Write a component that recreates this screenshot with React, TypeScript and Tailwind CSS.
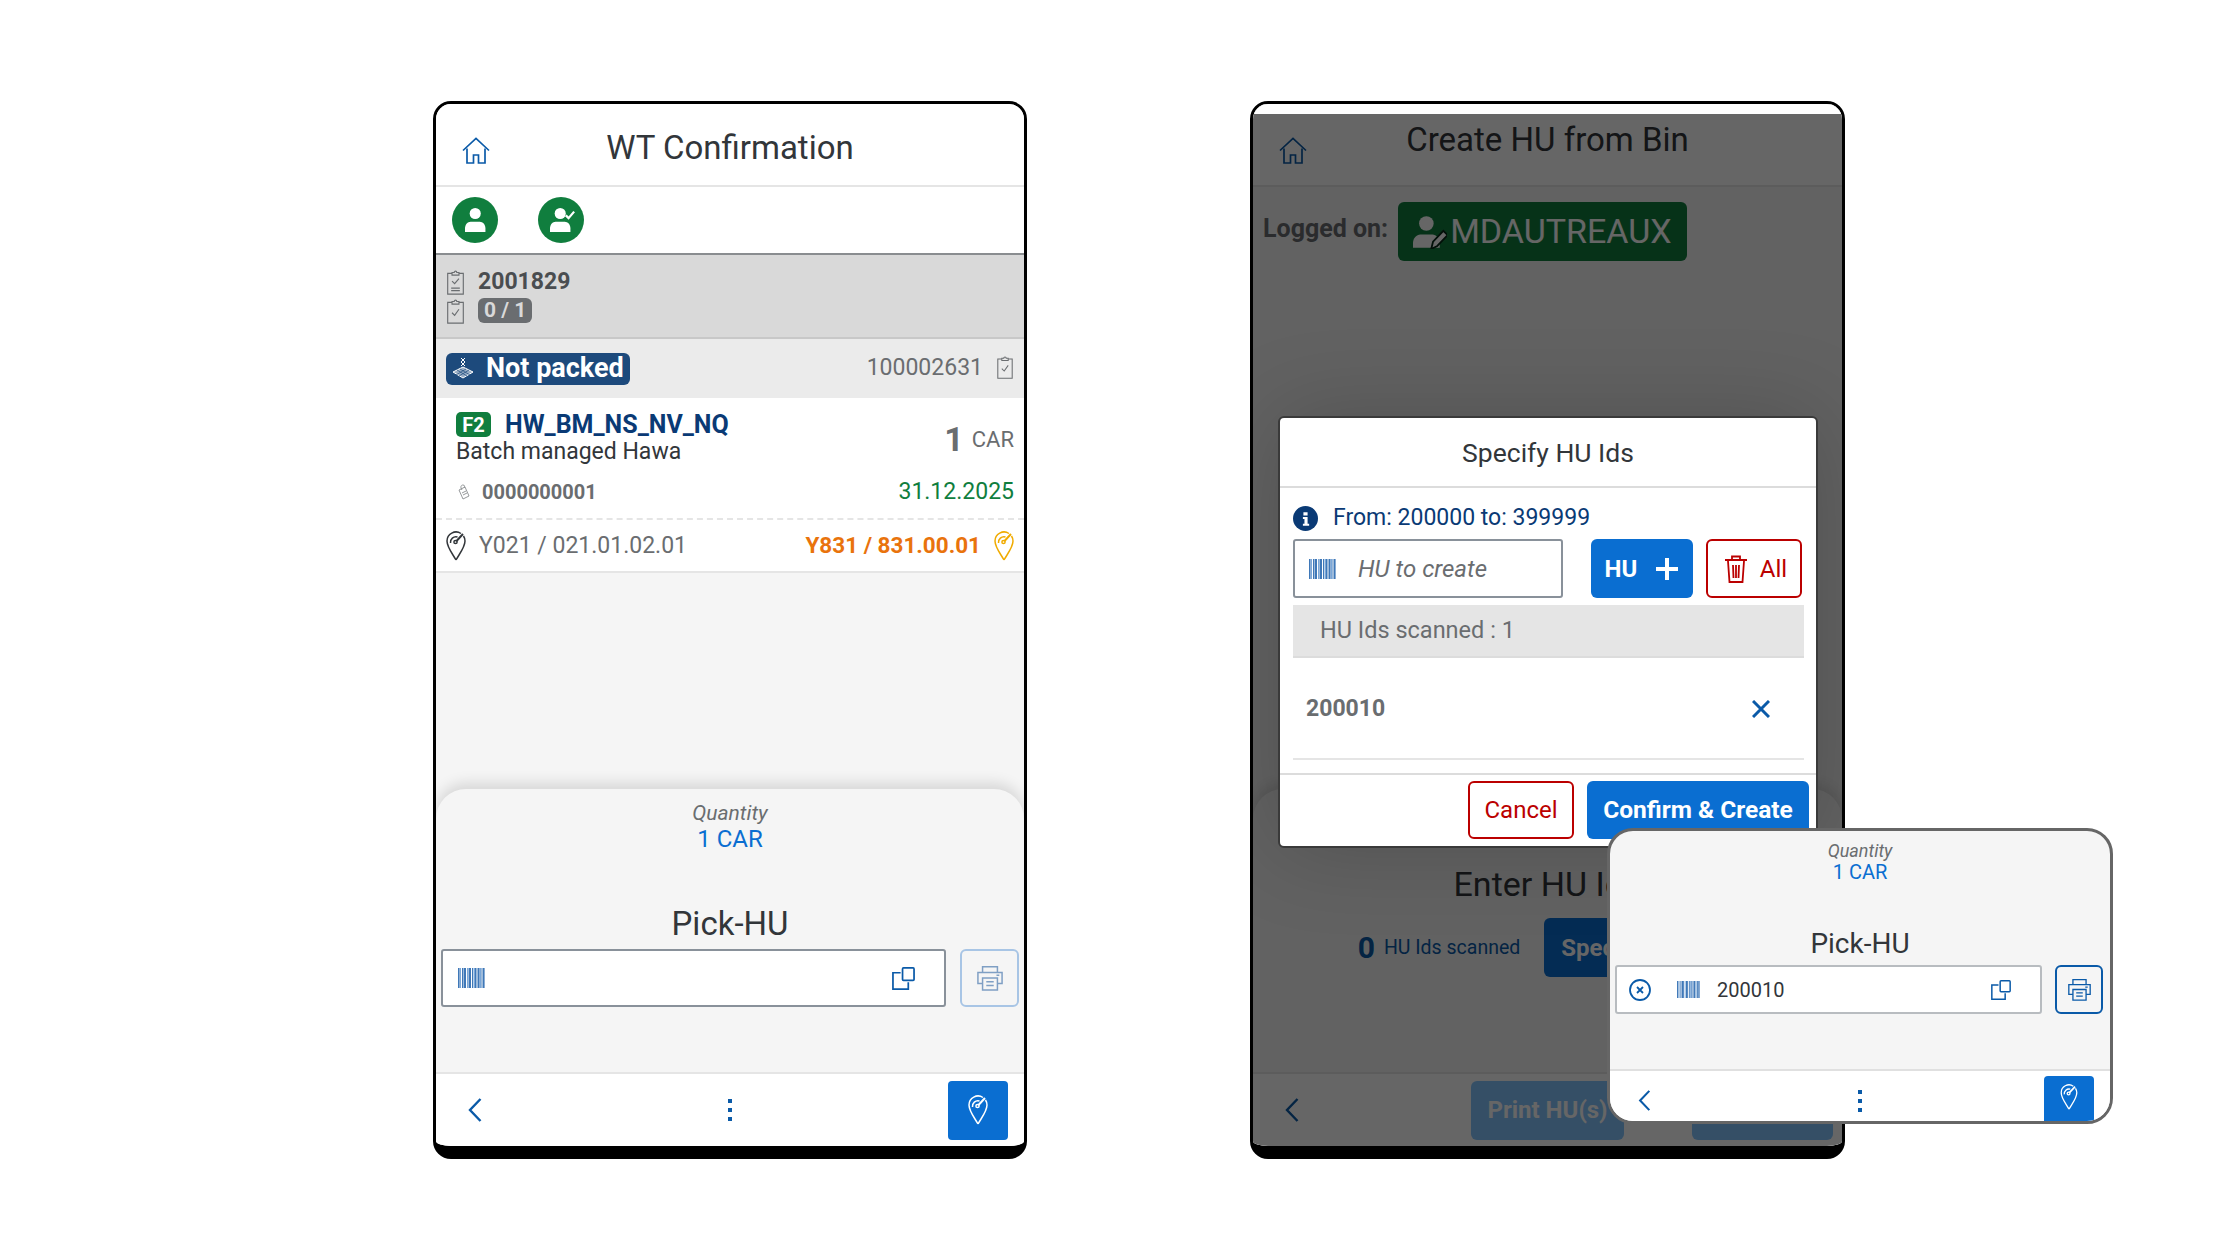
import type { ReactNode } from 'react';

const FONT = "font-['Roboto','Liberation_Sans',sans-serif]";

function IconHome({ className }: { className: string }) {
    return (
        <svg viewBox="0 0 28 28" fill="none" stroke="currentColor" strokeWidth="1.7" className={className}>
            <path d="M1 13.500 14 1.500l13 12" />
            <path d="M5 11.500V26h6.500v-8h5v8H23V11.500" />
        </svg>
    );
}

function IconPin({ className }: { className: string }) {
    return (
        <svg viewBox="0 0 20 30" fill="none" stroke="currentColor" strokeWidth="1.5" className={className}>
            <path d="M10 29C6 22 1 16 1 10a9 9 0 0 1 14-7.500" />
            <path d="M10 29c4-7 9-13 9-19 0-2-.6-3.600-1.500-5" />
            <path d="M4.500 12a5.500 5.500 0 0 1 7-6" />
            <circle cx="9.500" cy="11" r="1.600" />
            <path d="m10.500 10 6.500-7" strokeWidth="2" />
        </svg>
    );
}

function IconClipboard({ lines, className }: { lines?: boolean; className: string }) {
    return (
        <svg viewBox="0 0 20 30" fill="none" stroke="currentColor" strokeWidth="1.3" className={className}>
            <path d="M6 5H1v24h18V5h-5" />
            <path d="M6 7V4h2.500a1.500 1.500 0 0 1 3 0H14v3Z" />
            <path d={lines ? 'm6 14 3 3 5-6' : 'm6 17 3 3 5-7'} />
            {lines && <path d="M5 22h10M5 25h10" />}
        </svg>
    );
}

function IconBarcode({ className }: { className: string }) {
    const bars = [0, 2, 4, 5.5, 7, 9, 10.5, 12, 14, 15.5, 17, 18.5, 20, 22, 23.5, 25];
    return (
        <svg viewBox="0 0 27 20" className={className}>
            {bars.map((x, i) => (
                <rect key={x} x={x} y="0" width={i % 3 === 0 ? 1.6 : 1} height="20" fill={i % 4 === 1 ? '#7aa7d8' : '#3f78b8'} />
            ))}
        </svg>
    );
}

function IconCopy({ className }: { className: string }) {
    return (
        <svg viewBox="0 0 24 24" fill="none" stroke="currentColor" strokeWidth="1.8" className={className}>
            <rect x="11" y="1" width="12" height="13" rx="1" />
            <path d="M9 6H1v17h16v-7" />
        </svg>
    );
}

function IconPrinter({ className }: { className: string }) {
    return (
        <svg viewBox="0 0 28 28" fill="none" stroke="currentColor" strokeWidth="1.6" className={className}>
            <path d="M6 8V2h16v6" />
            <path d="M6 20H1V8h26v12h-5" />
            <path d="M6 14h16v13H6z" />
            <path d="M10 18h8M10 22h8M21 11h3" />
        </svg>
    );
}

function IconChevron({ className }: { className: string }) {
    return (
        <svg viewBox="0 0 14 24" fill="none" stroke="currentColor" strokeWidth="2.400" className={className}>
            <path d="M12.500 1 2 12l10.500 11" />
        </svg>
    );
}

function IconDots() {
    return (
        <div className="flex flex-col gap-[5px]">
            <span className="size-[4px] bg-[#0a5aa8]" />
            <span className="size-[4px] bg-[#0a5aa8]" />
            <span className="size-[4px] bg-[#0a5aa8]" />
        </div>
    );
}

function IconPerson({ className, check, edit }: { className: string; check?: boolean; edit?: boolean }) {
    return (
        <svg viewBox="0 0 28 28" className={className} fill="currentColor">
            <circle cx="11" cy="7" r="6" />
            <path d="M0 27v-4c0-4 3-7 6-7h10c3 0 6 3 6 7v4Z" />
            {check && <path d="m17 9 3 3 6-7" fill="none" stroke="currentColor" strokeWidth="2.400" />}
            {edit && <path d="M15 28l1.500-6L25 13l3.500 3.500-8.500 9Z" stroke="#072a17" strokeWidth="1.500" />}
        </svg>
    );
}

function IconTag({ className }: { className: string }) {
    return (
        <svg viewBox="0 0 14 16" fill="none" stroke="currentColor" strokeWidth="0.9" className={className}>
            <path d="m2 6 6-3 4 9-6 3Z" />
            <path d="M5 6c-2-3-1-5 1-5s2 2 1 3M5 9l4-2M6 11l4-2" />
        </svg>
    );
}

function IconPallet({ className }: { className: string }) {
    return (
        <svg viewBox="0 0 22 22" fill="none" stroke="currentColor" strokeWidth="1" className={className}>
            <path d="M9 1l4 4M13 1 9 5M9 5l4 4M13 5 9 9" />
            <path d="M11 10 1 15l10 6 10-6Z" fill="currentColor" fillOpacity="0.55" />
            <path d="m5 13 10 6M8 12l10 6M17 13 7 19M14 12 4 18" stroke="#1d4a7c" strokeWidth="0.7" />
        </svg>
    );
}

function QuantityBlock({ small }: { small?: boolean }) {
    return (
        <div className="flex flex-col items-center">
            <span className={`italic text-[#6a6d70] ${small ? 'text-[18px] leading-[20px]' : 'text-[21px] leading-[25px]'}`}>Quantity</span>
            <span className={`text-[#0a6ed1] ${small ? 'text-[20px] leading-[22px]' : 'text-[24px] leading-[26px]'}`}>1 CAR</span>
        </div>
    );
}

function WtConfirmationPhone() {
    return (
        <div className="flex h-[1058px] w-[594px] flex-col overflow-hidden rounded-[18px] border-[3px] border-b-[13px] border-black bg-[#f5f5f5]">
            <header className="relative flex h-[83px] shrink-0 items-center justify-center border-b-2 border-[#e5e5e5] bg-white pt-[7px]">
                <IconHome className="absolute left-[26px] top-[33px] size-[28px] text-[#0a5aa8]" />
                <h1 className="text-[33px] text-[#32363a]">WT Confirmation</h1>
            </header>
            <div className="flex h-[66px] shrink-0 items-center gap-[40px] bg-white pl-[16px]">
                <div className="flex size-[46px] items-center justify-center rounded-full bg-[#107e3e] text-white">
                    <IconPerson className="ml-[6px] size-[26px]" />
                </div>
                <div className="flex size-[46px] items-center justify-center rounded-full bg-[#107e3e] text-white">
                    <IconPerson check className="ml-[3px] size-[26px]" />
                </div>
            </div>
            <div className="flex h-[86px] shrink-0 flex-col justify-center gap-[3px] border-y-2 border-t-[#8a8d90] border-b-[#c8c8c8] bg-[#d9d9d9] pl-[10px]">
                <div className="flex items-center gap-[13px]">
                    <IconClipboard lines className="h-[26px] w-[19px] text-[#6a6d70]" />
                    <span className="text-[23px] font-bold leading-[26px] text-[#4a4d50]">2001829</span>
                </div>
                <div className="flex items-center gap-[13px]">
                    <IconClipboard className="h-[26px] w-[19px] text-[#6a6d70]" />
                    <span className="rounded-[6px] bg-[#6a6d70] px-[6px] text-[21px] font-bold leading-[25px] text-[#d9d9d9]">0 / 1</span>
                </div>
            </div>
            <div className="flex h-[59px] shrink-0 items-center justify-between bg-[#ebebeb] pl-[10px] pr-[10px]">
                <div className="flex h-[32px] w-[184px] items-center gap-[12px] rounded-[6px] bg-[#1d4a7c] pb-[1px] pl-[6px] text-white">
                    <IconPallet className="size-[22px]" />
                    <span className="text-[27px] font-bold leading-none">Not packed</span>
                </div>
                <div className="flex items-center gap-[13px]">
                    <span className="text-[23px] text-[#6a6d70]">100002631</span>
                    <IconClipboard className="mb-[4px] h-[24px] w-[18px] text-[#6a6d70]" />
                </div>
            </div>
            <div className="flex h-[120px] shrink-0 flex-col bg-white pl-[20px] pr-[10px]">
                <div className="flex items-center justify-between pt-[14px]">
                    <div className="flex flex-col">
                        <div className="flex items-center gap-[14px]">
                            <span className="flex h-[25px] w-[35px] items-center justify-center rounded-[5px] bg-[#107e3e] text-[20px] font-bold text-white">F2</span>
                            <span className="text-[25px] font-bold leading-[25px] text-[#0a3a75]">HW_BM_NS_NV_NQ</span>
                        </div>
                        <span className="pt-[1px] text-[23px] leading-[28px] text-[#32363a]">Batch managed Hawa</span>
                    </div>
                    <div className="flex items-center gap-[8px]">
                        <span className="text-[34px] font-bold leading-none text-[#6a6d70]">1</span>
                        <span className="text-[22px] text-[#6a6d70]">CAR</span>
                    </div>
                </div>
                <div className="mt-[9px] flex items-center justify-between">
                    <div className="flex items-center gap-[10px]">
                        <IconTag className="size-[16px] text-[#8a8d90]" />
                        <span className="text-[20px] font-bold text-[#6a6d70]">0000000001</span>
                    </div>
                    <span className="text-[23px] text-[#107e3e]">31.12.2025</span>
                </div>
            </div>
            <div className="flex h-[55px] shrink-0 items-center justify-between border-y-2 border-t-[#e5e5e5] border-b-[#e5e5e5] bg-white px-[10px] pt-[1px] [border-top-style:dashed]">
                <div className="flex items-center gap-[13px]">
                    <IconPin className="h-[30px] w-[20px] text-[#32363a]" />
                    <span className="text-[23px] text-[#6a6d70]">Y021 / 021.01.02.01</span>
                </div>
                <div className="flex items-center gap-[13px]">
                    <span className="text-[22.500px] font-bold text-[#e9730c]">Y831 / 831.00.01</span>
                    <IconPin className="h-[30px] w-[20px] text-[#f0ab00]" />
                </div>
            </div>
            <div className="flex-1" />
            <section className="flex h-[283px] shrink-0 flex-col items-center rounded-t-[30px] bg-[#f5f5f5] pt-[12px] shadow-[0_-6px_14px_rgba(0,0,0,0.12)]">
                <QuantityBlock />
                <h2 className="mt-[51px] text-[33px] leading-[42px] text-[#32363a]">Pick-HU</h2>
                <div className="mt-[4px] flex w-full gap-[14px] pl-[5px] pr-[5px]">
                    <div className="flex h-[58px] w-[505px] items-center justify-between rounded-[3px] border-2 border-[#89919a] bg-white px-[15px] pr-[29px]">
                        <IconBarcode className="h-[20px] w-[27px]" />
                        <IconCopy className="size-[23px] text-[#0a5aa8]" />
                    </div>
                    <div className="flex h-[58px] w-[59px] items-center justify-center rounded-[6px] border-2 border-[#a8c5e5]">
                        <IconPrinter className="size-[26px] text-[#7f9fc4]" />
                    </div>
                </div>
            </section>
            <footer className="flex h-[74px] shrink-0 items-center justify-between border-t-2 border-[#e5e5e5] bg-white pl-[32px] pr-[16px]">
                <div className="w-[44px]">
                    <IconChevron className="h-[24px] w-[14px] text-[#0a5aa8]" />
                </div>
                <IconDots />
                <div className="flex h-[59px] w-[60px] items-center justify-center rounded-[4px] bg-[#0a6ed1]">
                    <IconPin className="h-[30px] w-[20px] text-white" />
                </div>
            </footer>
        </div>
    );
}

function DialogButton({ className, children }: { className: string; children: ReactNode }) {
    return <div className={`flex h-[58px] items-center justify-center rounded-[6px] ${className}`}>{children}</div>;
}

function SpecifyDialog() {
    return (
        <div className="absolute left-[25px] top-[312px] flex h-[432px] w-[540px] flex-col rounded-[6px] border-2 border-[#3a3a3a] bg-white shadow-[0_0_90px_rgba(0,0,0,0.18)]">
            <div className="flex h-[70px] shrink-0 items-center justify-center border-b-2 border-[#dcdcdc] pt-[2px]">
                <h3 className="text-[26.500px] text-[#32363a]">Specify HU Ids</h3>
            </div>
            <div className="flex flex-1 flex-col pl-[13px] pr-[12px]">
                <div className="flex h-[51px] items-center gap-[15px] pt-[10px]">
                    <svg viewBox="0 0 24 24" className="size-[25px]">
                        <circle cx="12" cy="12" r="12" fill="#0a3a75" />
                        <path d="M10 6h4v3h-4zM9.500 10.500H14V17h1.500v2h-6v-2H11v-4.500H9.500z" fill="#fff" />
                    </svg>
                    <span className="text-[23px] text-[#0a3a75]">From: 200000 to: 399999</span>
                </div>
                <div className="flex gap-[13px]">
                    <div className="mr-[15px] flex h-[59px] w-[270px] items-center gap-[22px] rounded-[3px] border-2 border-[#89919a] pl-[14px]">
                        <IconBarcode className="h-[20px] w-[27px]" />
                        <span className="text-[24px] italic text-[#6a6d70]">HU to create</span>
                    </div>
                    <DialogButton className="h-[59px] w-[102px] gap-[18px] bg-[#0a6ed1] text-white">
                        <span className="text-[24px] font-bold">HU</span>
                        <svg viewBox="0 0 24 24" className="size-[24px]" fill="none" stroke="currentColor" strokeWidth="4">
                            <path d="M12 1v22M1 12h22" />
                        </svg>
                    </DialogButton>
                    <DialogButton className="h-[59px] w-[96px] gap-[12px] border-2 border-[#bb0000] pl-[3px] text-[#bb0000]">
                        <svg viewBox="0 0 24 28" fill="none" stroke="currentColor" strokeWidth="1.800" className="h-[28px] w-[24px]">
                            <path d="M1 5h22M8 4V1.500h8V4M4 6l1.500 21h13L20 6M9 10l.5 13M12 10v13M15 10l-.5 13" />
                        </svg>
                        <span className="text-[24px]">All</span>
                    </DialogButton>
                </div>
                <div className="mt-[7px] flex h-[53px] shrink-0 items-center border-b-2 border-[#dcdcdc] bg-[#e5e5e5] pl-[27px]">
                    <span className="text-[23.500px] text-[#6a6d70]">HU Ids scanned : 1</span>
                </div>
                <div className="flex h-[102px] shrink-0 items-center justify-between border-b-2 border-[#e5e5e5] pl-[13px] pr-[34px] pt-[2px]">
                    <span className="text-[23px] font-bold text-[#6a6d70]">200010</span>
                    <svg viewBox="0 0 18 18" className="size-[18px] text-[#0a5aa8]" fill="none" stroke="currentColor" strokeWidth="3">
                        <path d="m1 1 16 16M17 1 1 17" />
                    </svg>
                </div>
            </div>
            <div className="flex h-[73px] shrink-0 items-start justify-end gap-[13px] border-t-2 border-[#dcdcdc] pr-[7px] pt-[6px]">
                <DialogButton className="w-[106px] border-2 border-[#bb0000] text-[#bb0000]">
                    <span className="text-[24px]">Cancel</span>
                </DialogButton>
                <DialogButton className="w-[222px] bg-[#0a6ed1] text-white">
                    <span className="text-[24.500px] font-bold">Confirm &amp; Create</span>
                </DialogButton>
            </div>
        </div>
    );
}

function CreateHuPhone() {
    return (
        <div className="relative flex h-[1058px] w-[595px] flex-col overflow-hidden rounded-[18px] border-[3px] border-b-[13px] border-black bg-[#f5f5f5]">
            <header className="relative flex h-[83px] shrink-0 justify-center border-b-2 border-[#e5e5e5] bg-white">
                <IconHome className="absolute left-[26px] top-[33px] size-[28px] text-[#0a5aa8]" />
                <h1 className="pt-[14px] text-[33px] leading-[44px] text-[#32363a]">Create HU from Bin</h1>
            </header>
            <div className="flex shrink-0 items-start gap-[10px] pl-[10px] pt-[15px]">
                <span className="pt-[8px] text-[25px] font-bold text-[#6a6d70]">Logged on:</span>
                <div className="flex h-[59px] w-[289px] items-center gap-[3px] rounded-[6px] bg-[#107e3e] pl-[15px] text-white">
                    <IconPerson edit className="size-[34px]" />
                    <span className="text-[34px]">MDAUTREAUX</span>
                </div>
            </div>
            <div className="flex-1" />
            <section className="flex h-[283px] shrink-0 flex-col items-center rounded-t-[30px] bg-[#f5f5f5] pt-[73px] shadow-[0_-6px_14px_rgba(0,0,0,0.12)]">
                <h2 className="text-[34px] leading-[44px] text-[#32363a]">Enter HU Ids</h2>
                <div className="mt-[12px] flex items-center">
                    <span className="text-[30px] font-bold text-[#0a5aa8]">0</span>
                    <span className="ml-[9px] text-[19.500px] text-[#0a5aa8]">HU Ids scanned</span>
                    <div className="ml-[24px] flex h-[59px] w-[193px] items-center rounded-[6px] bg-[#0a6ed1] pl-[17px] text-[24px] font-bold text-white">Specify</div>
                </div>
            </section>
            <footer className="flex h-[74px] shrink-0 items-center border-t-2 border-[#e5e5e5] bg-white pl-[32px]">
                <IconChevron className="h-[24px] w-[14px] text-[#0a5aa8]" />
                <div className="ml-[172px] flex h-[59px] w-[153px] items-center justify-center rounded-[6px] bg-[#85c5ff] text-[24px] font-bold text-white">Print HU(s)</div>
                <div className="ml-[68px] h-[59px] w-[141px] rounded-[6px] bg-[#85c5ff]" />
            </footer>
            <div className="absolute inset-0 border-t-[10px] border-white bg-black/60" />
            <SpecifyDialog />
        </div>
    );
}

function PickHuCard() {
    return (
        <div className="absolute left-[1607px] top-[828px] flex h-[296px] w-[506px] flex-col overflow-hidden rounded-[26px] border-[3px] border-[#666666] bg-[#f5f5f5]">
            <div className="flex h-[238px] shrink-0 flex-col items-center pt-[10px]">
                <QuantityBlock small />
                <h2 className="mt-[43px] text-[28px] leading-[36px] text-[#32363a]">Pick-HU</h2>
                <div className="mt-[3px] flex w-full gap-[13px] pl-[5px]">
                    <div className="flex h-[49px] w-[427px] shrink-0 items-center rounded-[3px] border-2 border-[#b8bcc0] bg-white pl-[12px]">
                        <svg viewBox="0 0 22 22" className="size-[22px] shrink-0 text-[#0a5aa8]" fill="none" stroke="currentColor" strokeWidth="1.800">
                            <circle cx="11" cy="11" r="10" />
                            <path d="m8 8 6 6M14 8l-6 6" />
                        </svg>
                        <IconBarcode className="ml-[26px] h-[17px] w-[23px] shrink-0" />
                        <span className="ml-[17px] flex-1 text-[20px] text-[#32363a]">200010</span>
                        <IconCopy className="mr-[29px] size-[20px] shrink-0 text-[#0a5aa8]" />
                    </div>
                    <div className="flex h-[49px] w-[48px] shrink-0 items-center justify-center rounded-[6px] border-2 border-[#0a5aa8]">
                        <IconPrinter className="size-[23px] text-[#0a5aa8]" />
                    </div>
                </div>
            </div>
            <footer className="flex flex-1 justify-between border-t-2 border-[#e0e0e0] bg-white pl-[28px] pr-[16px]">
                <div className="w-[38px]">
                    <IconChevron className="mt-[19px] h-[21px] w-[13px] text-[#0a5aa8]" />
                </div>
                <div className="mt-[19px]">
                    <IconDots />
                </div>
                <div className="mt-[5px] flex h-[60px] w-[50px] justify-center rounded-t-[4px] bg-[#0a6ed1] pt-[8px]">
                    <IconPin className="h-[26px] w-[18px] text-white" />
                </div>
            </footer>
        </div>
    );
}

export default function App() {
    return (
        <div className={`relative h-[1260px] w-[2240px] overflow-hidden bg-white pl-[433px] pt-[101px] ${FONT}`}>
            <div className="flex gap-[223px]">
                <WtConfirmationPhone />
                <CreateHuPhone />
            </div>
            <PickHuCard />
        </div>
    );
}
